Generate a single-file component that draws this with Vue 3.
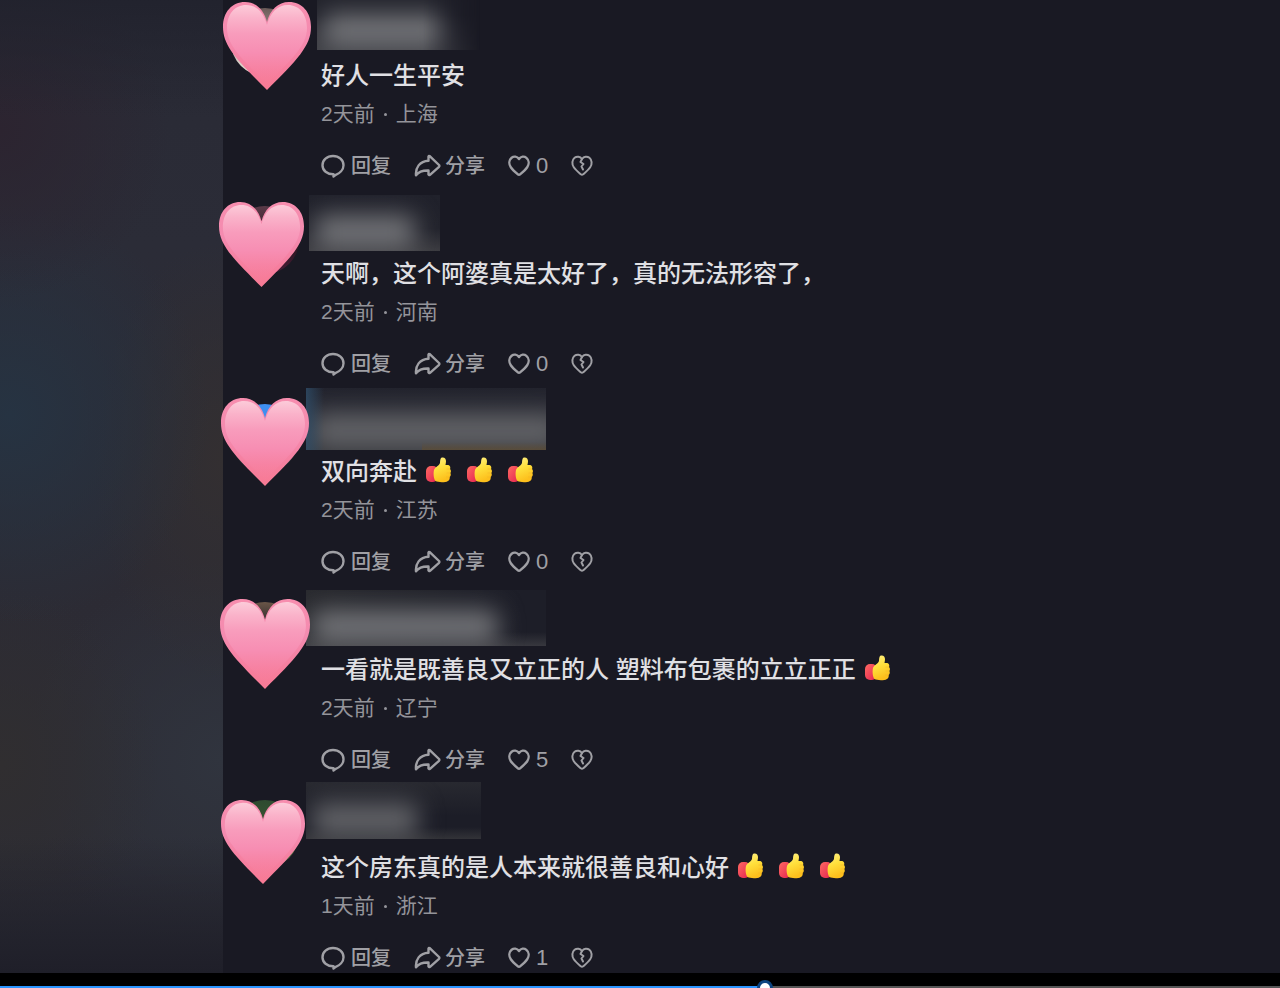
<script setup>
import { ref, computed } from 'vue'

const comments = ref([
  { id: 1, text: '好人一生平安', thumbs: 0, time: '2天前', place: '上海', likes: 0 },
  { id: 2, text: '天啊，这个阿婆真是太好了，真的无法形容了，', thumbs: 0, time: '2天前', place: '河南', likes: 0 },
  { id: 3, text: '双向奔赴', thumbs: 3, time: '2天前', place: '江苏', likes: 0 },
  { id: 4, text: '一看就是既善良又立正的人 塑料布包裹的立立正正', thumbs: 1, time: '2天前', place: '辽宁', likes: 5 },
  { id: 5, text: '这个房东真的是人本来就很善良和心好', thumbs: 3, time: '1天前', place: '浙江', likes: 1 }
])

const progress = ref(599)
const progressStyle = computed(() => ({ '--played': progress.value / 10 + '%' }))
</script>

<template>
  <div class="player">
    <svg class="defs" width="0" height="0" aria-hidden="true">
      <defs>
        <linearGradient id="heartBody" x1="0" y1="0" x2="0" y2="1">
          <stop offset="0" stop-color="#f78dae" />
          <stop offset="0.4" stop-color="#f48bb0" />
          <stop offset="0.75" stop-color="#f67f9f" />
          <stop offset="1" stop-color="#f87a94" />
        </linearGradient>
        <linearGradient id="heartShine" x1="0" y1="0" x2="0" y2="1">
          <stop offset="0" stop-color="#fccbd9" />
          <stop offset="0.16" stop-color="#fab3ca" />
          <stop offset="0.36" stop-color="#f89cbc" />
          <stop offset="0.6" stop-color="#f78eb3" />
          <stop offset="1" stop-color="#f87f9c" stop-opacity="0" />
        </linearGradient>
        <linearGradient id="thumbBody" x1="0" y1="0" x2="0.3" y2="1">
          <stop offset="0" stop-color="#fff08a" />
          <stop offset="0.5" stop-color="#ffe03c" />
          <stop offset="1" stop-color="#fdbf1c" />
        </linearGradient>
        <linearGradient id="thumbCuff" x1="0" y1="0" x2="1" y2="1">
          <stop offset="0" stop-color="#ff6a62" />
          <stop offset="1" stop-color="#e3204f" />
        </linearGradient>
      </defs>
    </svg>

    <main class="stage">
      <div class="backdrop"></div>
      <section class="comments" aria-label="评论">
        <article v-for="c in comments" :key="c.id" class="comment" :class="'c' + c.id">
          <div class="avatar"></div>
          <svg class="sticker" viewBox="0 0 88 88" aria-hidden="true">
            <path fill="url(#heartBody)" d="M44 20C41 8 33 0 22 0C9 0 0 10 0 25C0 44 14 58 44 88C74 58 88 44 88 25C88 10 79 0 66 0C55 0 47 8 44 20Z" />
            <path fill="url(#heartShine)" d="M44 23C41 11 34 3 23 3C12 3 4 12 4 26C4 43 18 56 44 82C70 56 84 43 84 26C84 12 76 3 65 3C54 3 47 11 44 23Z" />
          </svg>
          <div class="body">
            <div class="name"><div class="mask"></div></div>
            <p class="text">
              <span>{{ c.text }}</span>
              <svg v-for="n in c.thumbs" :key="n" class="thumb" viewBox="0 0 25 26" aria-hidden="true">
                <rect x="0" y="9" width="12" height="16" rx="5" fill="url(#thumbCuff)" />
                <path fill="url(#thumbBody)" d="M8 13C9 10 13 9 14 6C14.300 4 14 1 16 0.500C18.500 0 20 2 20 4C20 6 19.500 7 19.500 8L22 8C24 8.200 24.800 10.500 24 12C25.200 13 25.200 15 24.300 16C25.200 17.500 24.800 19.200 23.700 20C24 22 23 23.500 21.500 24.200C20 25.400 12 25.600 9.500 24C7.500 22 7.200 16 8 13Z" />
                <path fill="none" stroke="#f3b02a" stroke-width="0.5" d="M24 12L20.500 12M24.300 16L20.500 16M23.700 20L20 20" />
              </svg>
            </p>
            <p class="meta"><span>{{ c.time }}</span><i class="dot"></i><span>{{ c.place }}</span></p>
            <div class="actions">
              <button type="button">
                <svg class="reply" viewBox="0 0 24 24" aria-hidden="true">
                  <path d="M12 2C18 2 22.500 6 22.500 11.200C22.500 16 18.500 19.500 14.800 20.800L12.500 22.500V20.300C6 20.400 1.500 16.500 1.500 11.200C1.500 6 6 2 12 2Z" />
                </svg>
                <span>回复</span>
              </button>
              <button type="button">
                <svg class="share" viewBox="0 0 27 24" aria-hidden="true">
                  <path d="M14.500 2.500Q15 1.500 16 2.300L25 11Q25.700 12 25 12.800L16 20.800Q15 21.500 14.500 20.500V16.500C8.500 16.300 4.800 17.500 2 21.300C1.300 14 5.500 7 14.500 6.700Z" />
                </svg>
                <span>分享</span>
              </button>
              <button type="button" aria-label="喜欢" class="like">
                <svg class="heart" viewBox="0 0 22 24" aria-hidden="true">
                  <path d="M11 5C9 2.200 5.800 2 3.600 3.800C1 6 0.600 10 2.800 13.200C4.600 15.800 7.500 18.300 9.800 20.300Q11 21.300 12.200 20.300C14.500 18.300 17.400 15.800 19.200 13.200C21.400 10 21 6 18.400 3.800C16.200 2 13 2.200 11 5Z" />
                </svg>
                <span class="count">{{ c.likes }}</span>
              </button>
              <button type="button" aria-label="不喜欢">
                <svg class="heart broken" viewBox="0 0 22 24" aria-hidden="true">
                  <path d="M11 5C9 2.200 5.800 2 3.600 3.800C1 6 0.600 10 2.800 13.200C4.600 15.800 7.500 18.300 9.800 20.300Q11 21.300 12.200 20.300C14.500 18.300 17.400 15.800 19.200 13.200C21.400 10 21 6 18.400 3.800C16.200 2 13 2.200 11 5Z" />
                  <path d="M11 5L9.500 8L12.500 10L10.500 12.500L12 15.500" />
                </svg>
              </button>
            </div>
          </div>
        </article>
      </section>
    </main>

    <footer class="controls">
      <input v-model.number="progress" class="seek" type="range" min="0" max="1000" aria-label="播放进度" :style="progressStyle" />
    </footer>
  </div>
</template>

<style>
html,
body {
  background: #000;
}
</style>

<style scoped>
.player {
  display: flex;
  flex-direction: column;
  height: 100vh;
  overflow: hidden;
  background: #000;
  color: #e0e0e4;
  font-family: "Liberation Sans", "Noto Sans CJK SC", sans-serif;
}
.defs {
  position: absolute;
}
.stage {
  display: flex;
  flex: 1;
  min-height: 0;
  overflow: hidden;
  background: #191923;
}
.backdrop {
  flex: none;
  width: 223px;
  background:
    linear-gradient(to top, #1f1f29 0, rgba(31, 31, 41, 0) 14%),
    linear-gradient(to bottom, rgba(32, 33, 44, 0.8) 0, rgba(32, 33, 44, 0) 12%),
    radial-gradient(ellipse 170px 170px at 0 130px, #2c2430 0, rgba(44, 36, 48, 0) 100%),
    radial-gradient(ellipse 200px 210px at 10px 415px, #263342 0, rgba(38, 51, 66, 0) 100%),
    radial-gradient(ellipse 130px 220px at 223px 460px, #332f31 0, rgba(51, 47, 49, 0) 100%),
    radial-gradient(ellipse 160px 180px at 0 765px, #302e30 0, rgba(48, 46, 48, 0) 100%),
    radial-gradient(ellipse 200px 200px at 223px 760px, #30343e 0, rgba(48, 52, 62, 0) 100%),
    linear-gradient(to bottom, #292a35, #2b2c37 25%, #2c2b34 60%, #2c2d36);
}
.comments {
  flex: 1;
  display: flex;
  flex-direction: column;
  gap: 18px;
  min-width: 0;
}
.comment {
  position: relative;
  padding-left: 98px;
}
.avatar {
  position: absolute;
  left: 8px;
  top: 8px;
  width: 68px;
  height: 68px;
  border-radius: 50%;
  background: var(--photo);
}
.c1 { --photo: linear-gradient(#6b5a58, #cfc5bd 70%, #e4ddd2); --size: 88px; --x: 0; --y: 2px; }
.c2 { --photo: linear-gradient(#5a3a48, #2c1620 60%, #4a1c38); --size: 85px; --x: -4px; --y: 4px; }
.c3 { --photo: linear-gradient(#3f8ff0 30%, #2a241f 70%, #4e6670); --size: 88px; --x: -2px; --y: 2px; }
.c4 { --photo: linear-gradient(#6a5648, #1d1b24 40%); --size: 90px; --x: -3px; --y: 5px; }
.c5 { --photo: linear-gradient(#2d4a30, #3c5a34 50%, #6a7a4c); --size: 84px; --x: -2px; --y: 8px; }
.sticker {
  position: absolute;
  z-index: 1;
  left: var(--x);
  top: var(--y);
  width: var(--size);
  height: var(--size);
}
.name {
  position: relative;
  height: 60px;
}
.mask {
  position: absolute;
  overflow: hidden;
}
.mask::before {
  content: "";
  position: absolute;
  left: 6px;
  bottom: 2px;
  width: var(--bar);
  height: 34px;
  border-radius: 8px;
  background: #717276;
  filter: blur(12px);
}
.c1 .mask {
  --bar: 124px;
  left: -4px;
  top: -8px;
  width: 163px;
  height: 58px;
  background: linear-gradient(to top, #3c3d43, #22232c 60%);
  mask-image: linear-gradient(to right, #000 65%, transparent);
}
.c2 .mask {
  --bar: 100px;
  left: -12px;
  top: -3px;
  width: 131px;
  height: 56px;
  background: linear-gradient(to top, #3c3c41, #22232c 40%, #20212b);
}
.c3 .mask {
  --bar: 250px;
  left: -15px;
  top: -8px;
  width: 240px;
  height: 62px;
  background: linear-gradient(#22232d, #292a33 40%, #333439);
}
.c3 .mask::before {
  background: #626367;
}
.c3 .mask::after {
  content: "";
  position: absolute;
  inset: 0;
  background:
    linear-gradient(to right, rgba(48, 82, 112, 0.7), rgba(48, 82, 112, 0) 18px),
    linear-gradient(to top, rgba(100, 78, 46, 0.6), rgba(100, 78, 46, 0) 8px) right / 124px 100% no-repeat;
}
.c4 .mask {
  --bar: 186px;
  left: -15px;
  top: -4px;
  width: 240px;
  height: 56px;
  background:
    linear-gradient(to top, rgba(72, 72, 76, 0.6), rgba(72, 72, 76, 0) 14px),
    linear-gradient(to right, #292a2f, #1d1e28 90%);
}
.c5 .mask {
  --bar: 106px;
  left: -15px;
  top: -10px;
  width: 175px;
  height: 57px;
  background:
    linear-gradient(to top, rgba(72, 72, 72, 0.5), rgba(72, 72, 72, 0) 12px),
    linear-gradient(to bottom, #282930, #1c1d27 60%);
}
.c5 .mask::before {
  background: #626367;
}
.text {
  display: flex;
  align-items: center;
  gap: 16px;
  margin: 0 0 8px;
  font-size: 24px;
  line-height: 32px;
  font-weight: 500;
  white-space: nowrap;
}
.text span {
  margin-right: -7px;
}
.thumb {
  flex: none;
  width: 25px;
  height: 26px;
  margin-bottom: 4px;
}
.meta {
  display: flex;
  align-items: center;
  gap: 9px;
  margin: 0 0 24px;
  color: #94949a;
  font-size: 21px;
  line-height: 28px;
}
.dot {
  width: 3px;
  height: 3px;
  border-radius: 50%;
  background: currentColor;
}
.actions {
  display: flex;
  align-items: center;
  gap: 23px;
  height: 28px;
}
.actions button {
  display: flex;
  align-items: center;
  gap: 6px;
  padding: 0;
  border: 0;
  background: none;
  color: #a0a0a5;
  font: inherit;
  font-size: 20px;
  font-weight: 500;
  line-height: 28px;
  cursor: pointer;
}
.actions svg {
  flex: none;
  height: 24px;
  fill: none;
  stroke: currentColor;
  stroke-width: 2.4;
  stroke-linejoin: round;
  stroke-linecap: round;
}
.reply {
  width: 24px;
}
.share {
  width: 27px;
}
.actions button:nth-child(2) {
  gap: 4px;
}
.heart {
  width: 22px;
}
.actions .broken {
  stroke-width: 2;
}
.count {
  min-width: 12px;
  font-size: 22px;
  text-align: left;
}
.controls {
  flex: none;
  height: 15px;
  background: #000;
}
.seek {
  display: block;
  width: 100%;
  height: 30px;
  margin: 0;
  appearance: none;
  background: linear-gradient(to right, #2b95ff var(--played), #555 var(--played)) center / 100% 4px no-repeat;
  cursor: pointer;
}
.seek::-webkit-slider-thumb {
  appearance: none;
  width: 16px;
  height: 16px;
  border: 3px solid #0d4480;
  border-radius: 50%;
  background: #fff;
}
</style>
